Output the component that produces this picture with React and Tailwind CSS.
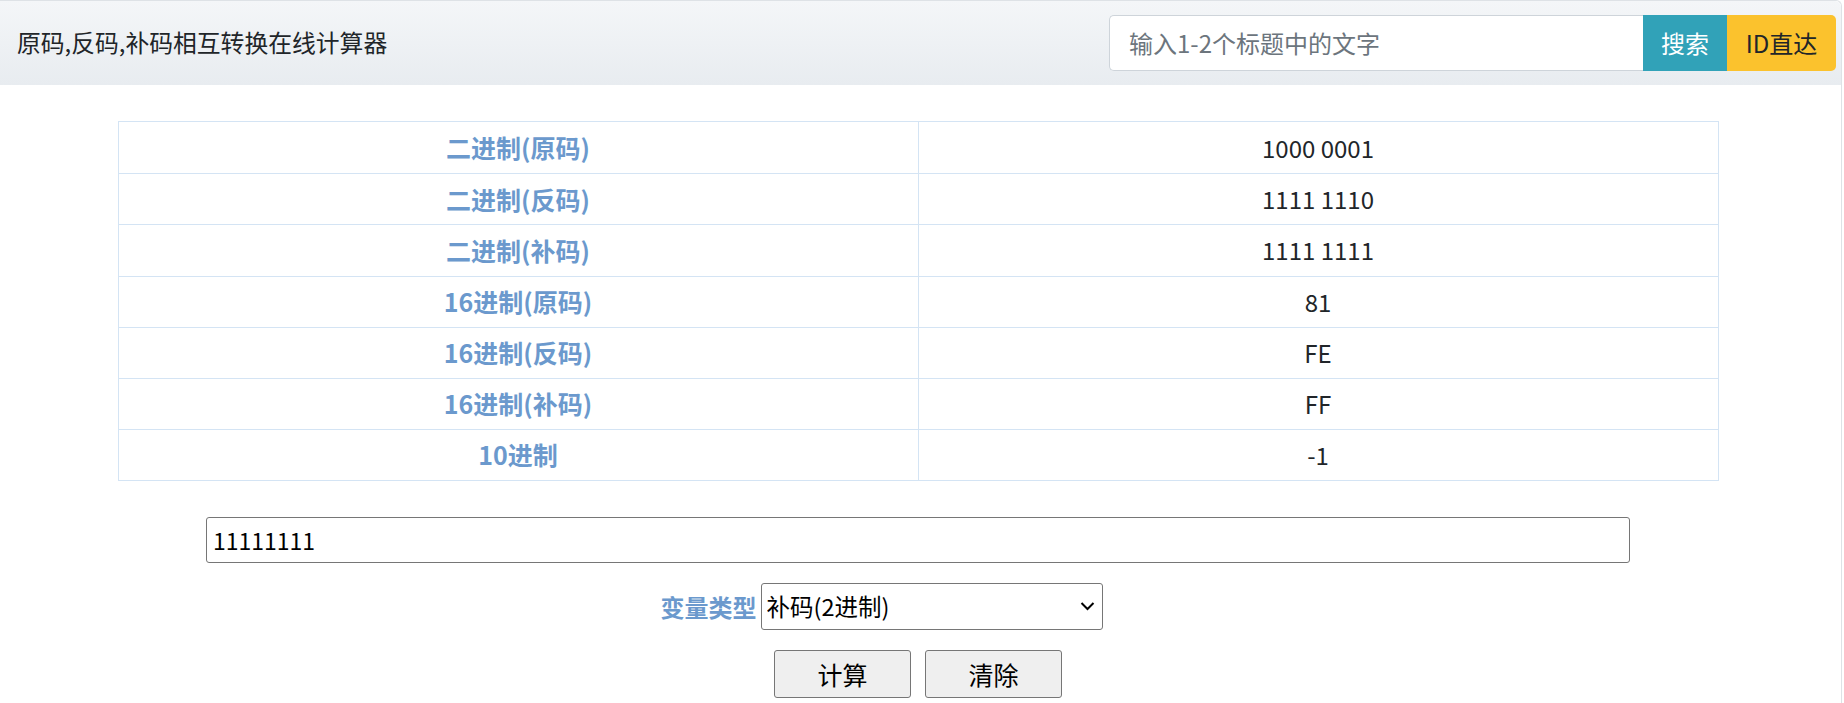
import { useState } from 'react'

const rows = [
  ['二进制(原码)', '1000 0001'],
  ['二进制(反码)', '1111 1110'],
  ['二进制(补码)', '1111 1111'],
  ['16进制(原码)', '81'],
  ['16进制(反码)', 'FE'],
  ['16进制(补码)', 'FF'],
  ['10进制', '-1'],
]

const font = { fontFamily: '"Noto Sans CJK SC", "Noto Sans", sans-serif' }

export default function App() {
  const [value, setValue] = useState('11111111')
  const [kind, setKind] = useState('bu2')

  return (
    <div className="min-h-[703px] w-[1844px] bg-white text-[#212529]" style={font}>
      <div className="w-[1842px] min-h-[703px] border-t border-r border-[#dee2e6] rounded-tr-[6px]">
        {/* Top bar */}
        <div className="h-[84px] flex items-center justify-between pl-[17px] pr-[5px] bg-gradient-to-b from-[#f4f6f8] to-[#e8ecf0] rounded-tr-[6px]">
          <h1 className="text-[23.8px] leading-none text-[#212529] -mt-[2px]">原码,反码,补码相互转换在线计算器</h1>
          <div className="flex h-[56px] -mt-[1px]">
            <input
              className="w-[534px] h-full border border-[#ced4da] border-r-0 rounded-l-[5px] bg-white px-[19px] text-[24px] outline-none placeholder:text-[#6c757d]"
              placeholder="输入1-2个标题中的文字"
            />
            <button className="w-[84px] h-full bg-[#31a2b8] text-white text-[24px]">搜索</button>
            <button className="w-[109px] h-full bg-[#fbc22d] text-[#212529] text-[24px] rounded-r-[5px]">ID直达</button>
          </div>
        </div>

        <div className="w-[1836px] flex flex-col items-center">
          {/* Result table */}
          <div className="mt-[36px] w-[1601px] border border-[#d4e4f4]">
            {rows.map(([label, val], i) => (
              <div key={label} className={`flex h-[51.2px] ${i > 0 ? 'border-t border-[#d4e4f4]' : ''}`}>
                <div className="w-[800px] flex items-center justify-center border-r border-[#d4e4f4] text-[25px] font-bold text-[#6b99cd]">
                  {label}
                </div>
                <div className="flex-1 flex items-center justify-center text-[24px] text-[#212529]">{val}</div>
              </div>
            ))}
          </div>

          {/* Input */}
          <input
            value={value}
            onChange={e => setValue(e.target.value)}
            className="mt-[36px] w-[1424px] h-[46px] border border-[#767676] rounded-[3px] px-[6px] text-[23px] text-black outline-none"
          />

          {/* Type select */}
          <div className="mt-[20px] flex items-center gap-[4px] pr-[73px]">
            <span className="text-[24px] font-bold text-[#6b99cd]">变量类型</span>
            <div className="relative">
              <select
                value={kind}
                onChange={e => setKind(e.target.value)}
                className="appearance-none w-[342px] h-[47px] border border-[#767676] rounded-[3px] bg-white pl-[5px] text-[23.5px] text-black outline-none"
              >
                <option value="yuan2">原码(2进制)</option>
                <option value="fan2">反码(2进制)</option>
                <option value="bu2">补码(2进制)</option>
                <option value="yuan16">原码(16进制)</option>
                <option value="fan16">反码(16进制)</option>
                <option value="bu16">补码(16进制)</option>
                <option value="dec">10进制</option>
              </select>
              <svg className="absolute right-[8px] top-[18px] pointer-events-none" width="15" height="10" viewBox="0 0 15 10" fill="none">
                <path d="M1.5 2l6 6 6-6" stroke="#000" strokeWidth="2" />
              </svg>
            </div>
          </div>

          {/* Buttons */}
          <div className="mt-[20px] flex gap-[14px]">
            <button className="w-[137px] h-[48px] bg-[#efefef] border border-[#767676] rounded-[3px] text-[25px] text-black">计算</button>
            <button className="w-[137px] h-[48px] bg-[#efefef] border border-[#767676] rounded-[3px] text-[25px] text-black" onClick={() => setValue('')}>清除</button>
          </div>
        </div>
      </div>
    </div>
  )
}
